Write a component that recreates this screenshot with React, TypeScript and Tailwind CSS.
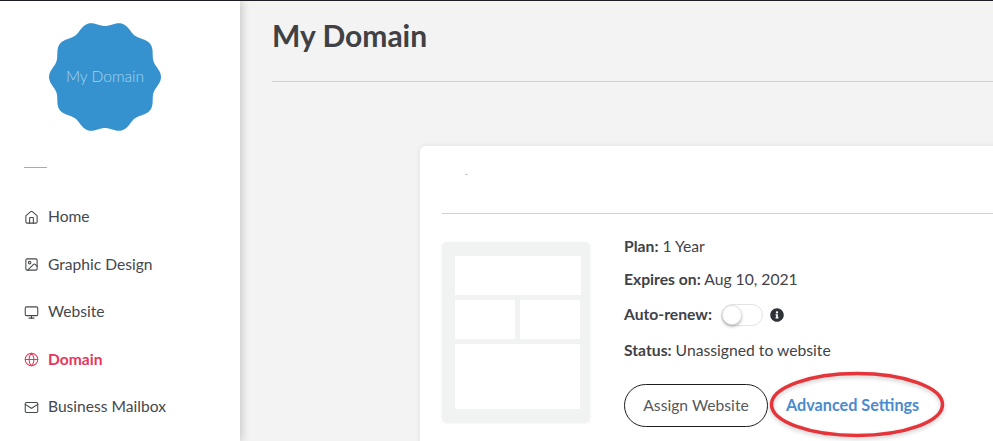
import { Globe, Home, Image, Mail, Monitor } from 'lucide-react';
import { FaInfoCircle } from 'react-icons/fa';

const navItems = [
  { label: 'Home', icon: Home },
  { label: 'Graphic Design', icon: Image },
  { label: 'Website', icon: Monitor },
  { label: 'Domain', icon: Globe, active: true },
  { label: 'Business Mailbox', icon: Mail },
];

// wavy badge outline, 10 lobes
const badgePath =
  Array.from({ length: 200 }, (_, i) => {
    const t = (i / 200) * Math.PI * 2;
    const r = 53.5 + 2.5 * Math.cos(10 * t);
    return `${i === 0 ? 'M' : 'L'}${(56 + r * Math.cos(t)).toFixed(2)} ${(56 + r * Math.sin(t)).toFixed(2)}`;
  }).join(' ') + ' Z';

function Sidebar() {
  return (
    <div className="w-[240px] shrink-0 bg-white shadow-[2px_0_8px_rgba(0,0,0,0.18)] z-10 flex flex-col">
      <div className="relative ml-[49px] mt-[20px] w-[112px] h-[112px]">
        <svg width="112" height="112" viewBox="0 0 112 112">
          <path d={badgePath} fill="#3592ce" />
        </svg>
        <span className="absolute inset-0 flex items-center justify-center font-['Lato',sans-serif] font-light text-[15.6px] text-[#a6d3ef]">
          My Domain
        </span>
      </div>
      <div className="ml-[24px] mt-[34px] w-[23px] h-px bg-[#aaaaaa]" />
      <div className="mt-[37px] flex flex-col gap-[23.5px] pl-[24px]">
        {navItems.map((item) => (
          <div
            key={item.label}
            className={
              item.active
                ? 'flex items-center h-[24px] text-[#e5375b] font-bold'
                : 'flex items-center h-[24px] text-[#45484d]'
            }
          >
            <item.icon size={15} strokeWidth={1.7} className="shrink-0" />
            <span className="ml-[9px] text-[15.6px]">{item.label}</span>
          </div>
        ))}
      </div>
    </div>
  );
}

function Thumb() {
  return (
    <div className="w-[148px] h-[180px] shrink-0 bg-[#f1f3f3] rounded-[5px] shadow-[0_1px_3px_rgba(0,0,0,0.08)] pl-[13px] pt-[14px] flex flex-col gap-[5px]">
      <div className="w-[126px] h-[39px] bg-white" />
      <div className="flex gap-[5px]">
        <div className="w-[60px] h-[39px] bg-white" />
        <div className="w-[60px] h-[39px] bg-white" />
      </div>
      <div className="w-[125px] h-[65px] bg-white" />
    </div>
  );
}

function Card() {
  return (
    <div className="ml-[180px] mt-[64px] w-[600px] h-[320px] bg-white rounded-tl-[6px] shadow-[0_0_6px_rgba(0,0,0,0.08)] pl-[22px]">
      <div className="h-[68px] border-b border-[#d0d0d0] pt-[28px] pl-[23px]">
        <div className="w-[3px] h-px bg-[#c8c8c8]" />
      </div>
      <div className="flex mt-[28px]">
        <Thumb />
        <div className="relative ml-[34px] text-[15.7px] text-[#3f4247]">
          <div className="h-[24px] mt-[-7px] flex items-center">
            <b>Plan:</b>&nbsp;1 Year
          </div>
          <div className="h-[24px] mt-[9px] flex items-center">
            <b>Expires on:</b>&nbsp;Aug 10, 2021
          </div>
          <div className="h-[24px] mt-[11px] flex items-center">
            <b>Auto-renew:</b>
            <div className="ml-[9px] w-[42px] h-[22px] rounded-full border border-[#e4e4e4] bg-white">
              <div className="w-[20px] h-[20px] rounded-full bg-white border border-[#e0e0e0] shadow-[0_2px_3px_rgba(0,0,0,0.25)]" />
            </div>
            <FaInfoCircle size={14} className="ml-[7px] text-[#2f3236]" />
          </div>
          <div className="h-[24px] mt-[12px] flex items-center">
            <b>Status:</b>&nbsp;Unassigned to website
          </div>
          <div className="mt-[21px] flex items-center">
            <button className="w-[144px] h-[43px] rounded-full border border-[#1c1c1c] text-[#55585c] text-[15.7px]">
              Assign Website
            </button>
            <span className="ml-[18px] font-bold text-[#4a8bcf] text-[16.2px]">Advanced Settings</span>
          </div>
          <svg
            className="absolute left-[145px] top-[128px] drop-shadow-[0_2px_2px_rgba(0,0,0,0.2)]"
            width="180"
            height="72"
            viewBox="0 0 180 72"
            fill="none"
          >
            <ellipse cx="88" cy="34.5" rx="85.5" ry="31" stroke="#e6353a" strokeWidth="3.5" />
          </svg>
        </div>
      </div>
    </div>
  );
}

export default function App() {
  return (
    <div className="relative w-[993px] h-[441px] overflow-hidden flex bg-[#f3f3f3] border-t border-[#1e1f24] font-['Lato',sans-serif]">
      <Sidebar />
      <div className="flex-1 min-w-0 overflow-hidden">
        <div className="ml-[32px] h-[81px] border-b border-[#cfcfcf]">
          <h1 className="pt-[15px] text-[30px] leading-[38px] font-bold text-[#3f4144]">My Domain</h1>
        </div>
        <Card />
      </div>
    </div>
  );
}
